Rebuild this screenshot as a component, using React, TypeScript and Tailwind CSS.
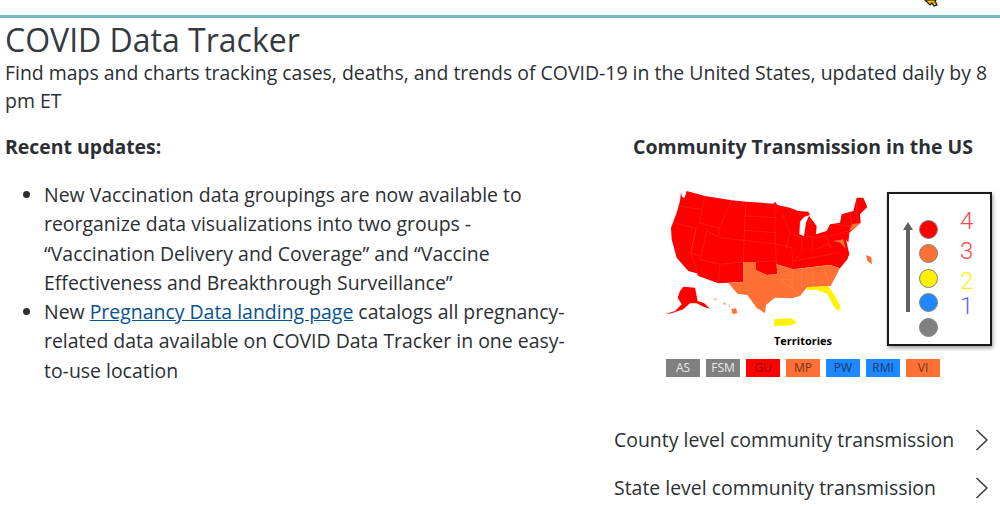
const chips = [
  { label: "AS", bg: "bg-[#808080]", fg: "text-[#e8e8e8]" },
  { label: "FSM", bg: "bg-[#808080]", fg: "text-[#e8e8e8]" },
  { label: "GU", bg: "bg-[#ff0000]", fg: "text-[#8a1010]" },
  { label: "MP", bg: "bg-[#ff7034]", fg: "text-[#6b3520]" },
  { label: "PW", bg: "bg-[#1e88ff]", fg: "text-[#123a66]" },
  { label: "RMI", bg: "bg-[#1e88ff]", fg: "text-[#123a66]" },
  { label: "VI", bg: "bg-[#ff7034]", fg: "text-[#6b3520]" },
];

const levels = ["bg-[#ff0000]", "bg-[#ff7034]", "bg-[#fff200]", "bg-[#1e88ff]", "bg-[#808080]"];

function UsMap() {
  return (
    <svg width="220" height="150" viewBox="0 0 660 450" strokeLinejoin="round" className="block blur-[0.4px]">
      {/* lower 48, red part */}
      <path
        fill="#ff0000"
        d="M63 33 L66 48 L74 50 L80 30 L135 45 L215 58 L260 62 L340 68 L345 62 L352 72 L390 80 L415 90 L445 92 L450 102 L432 108 L420 122 L418 160 L432 165 L438 125 L447 104 L470 135 L468 160 L500 150 L510 130 L540 125 L545 100 L580 90 L590 50 L610 50 L622 78 L600 100 L602 125 L580 145 L568 155 L565 185 L558 175 L568 220 L562 235 L540 262 L510 252 L400 265 L350 250 L352 280 L320 282 L288 268 L288 243 L250 243 L250 303 L205 305 L175 307 L115 285 L110 277 L85 270 L50 230 L35 175 L33 140 L50 95 L60 60 Z"
      />
      {/* orange states */}
      <path
        fill="#ff7034"
        d="M250 243 L288 243 L288 268 L320 282 L352 280 L350 250 L400 265 L510 252 L540 262 L512 315 L440 320 L420 345 L395 352 L345 350 L318 372 L315 397 L290 380 L262 342 L232 338 L205 306 L250 303 Z"
      />
      <path fill="#ff7034" d="M575 130 L602 125 L580 145 L568 150 Z M520 180 L550 175 L558 205 L550 195 L540 185 Z M618 222 L634 228 L636 250 L622 240 Z M214 384 L228 382 L232 396 L218 400 Z M160 352 L170 354 L168 358 Z M188 364 L198 368 L194 372 Z M204 372 L210 374 L208 378 Z" />
      {/* florida and puerto rico */}
      <path fill="#fff200" d="M440 318 L505 315 L525 345 L541 375 L537 392 L522 378 L502 338 L470 327 L440 326 Z M343 414 L395 412 L410 424 L396 433 L342 435 Z" />
      {/* alaska */}
      <path
        fill="#ff0000"
        d="M70 317 L105 320 L113 360 L133 367 L150 383 L130 377 L110 367 L90 367 L70 385 L35 397 L15 400 L45 390 L65 370 L53 350 L60 330 Z"
      />
      {/* state lines */}
      <path
        fill="none"
        stroke="#ff6a6a"
        strokeOpacity="0.7"
        strokeWidth="1"
        d="M135 45 L118 125 L178 142 L175 168 L140 150 M55 75 L125 85 M40 125 L108 142 L92 215 L118 225 M108 142 L92 215 L115 285 M140 150 L120 235 L180 250 L175 307 M180 250 L250 243 M178 170 L252 178 L250 243 M215 58 L178 142 M258 62 L252 178 M252 105 L345 110 M252 148 L350 155 M252 178 L345 188 L350 250 M345 68 L345 188 M288 243 L350 240 M345 188 L395 200 L400 265 M368 100 L390 155 L378 205 M390 155 L425 170 L425 215 L400 240 M425 170 L455 165 L458 205 M458 170 L500 165 M400 240 L540 215 M470 205 L500 190 L520 200 M500 165 L510 200 M510 165 L565 150 M525 130 L570 135 M570 90 L575 130 M590 60 L590 115"
      />
      <path
        fill="none"
        stroke="#ff9a70"
        strokeWidth="1"
        d="M400 265 L395 320 L360 295 M395 320 L420 345 M425 260 L425 322 M455 258 L462 318 M490 254 L510 315 M365 295 L400 295"
      />
    </svg>
  );
}

export default function App() {
  return (
    <div
      className="relative w-[1000px] h-[508px] overflow-hidden bg-white text-[#2b2f33]"
      style={{ fontFamily: '"Open Sans", sans-serif' }}
    >
      {/* mouse pointer cut off by the top edge */}
      <svg width="14" height="7" viewBox="0 0 14 7" className="absolute left-[924px] top-0">
        <path d="M1 0 L6 5 L8 3 L10 6 L13 5 L11 1 L12 0 Z" fill="#f5b000" stroke="#1a1a1a" strokeWidth="1.2" />
      </svg>

      <div className="h-[15px]" />
      <div className="h-[3px] bg-[#78b9c1]" />

      <div className="pl-[5px] pr-[8px]">
        <h1 className="text-[32px] leading-[44px] text-[#343a40]">COVID Data Tracker</h1>
        <p className="text-[19.45px] leading-[28px] -mt-[3px]">
          Find maps and charts tracking cases, deaths, and trends of COVID-19 in the United States, updated daily by 8 pm ET
        </p>
      </div>

      <div className="flex mt-[18px]">
        <div className="w-[600px] pl-[5px]">
          <h2 className="text-[19.45px] leading-[28px] font-bold">Recent updates:</h2>
          <ul className="list-disc pl-[39px] pr-[30px] mt-[19px] text-[19.45px] leading-[29.3px]">
            <li>
              New Vaccination data groupings are now available to reorganize data visualizations into two groups - “Vaccination Delivery and Coverage” and “Vaccine Effectiveness and Breakthrough Surveillance”
            </li>
            <li>
              New <a className="text-[#075290] underline">Pregnancy Data landing page</a> catalogs all pregnancy-related data available on COVID Data Tracker in one easy-to-use location
            </li>
          </ul>
        </div>

        <div className="w-[400px] flex flex-col">
          <h2 className="text-[19.45px] leading-[28px] font-bold pl-[33px] whitespace-nowrap">Community Transmission in the US</h2>

          <div className="flex mt-[20px] pl-[60px]">
            <div className="flex flex-col w-[220px] shrink-0">
              <UsMap />
              <div className="text-[11px] leading-[14px] font-bold text-black text-center pl-[66px] mt-[3px]">Territories</div>
              <div className="flex gap-[6px] mt-[11px] pl-[6px] w-[300px]">
                {chips.map((c) => (
                  <span key={c.label} className={`w-[34px] h-[18px] shrink-0 flex items-center justify-center text-[12px] ${c.bg} ${c.fg}`}>
                    {c.label}
                  </span>
                ))}
              </div>
            </div>

            <div className="w-[105px] h-[154px] shrink-0 ml-[7px] mt-[11px] border-2 border-[#1a1a1a] shadow-[1px_2px_4px_rgba(0,0,0,0.4)] flex">
              <div className="flex flex-col items-center w-[17px] ml-[10px] mt-[28px]">
                <div className="w-0 h-0 border-x-[5px] border-x-transparent border-b-[8px] border-b-[#606060]" />
                <div className="w-[4px] h-[82px] bg-[#606060]" />
              </div>
              <div className="flex flex-col gap-[5.4px] ml-[3px] mt-[26px]">
                {levels.map((bg) => (
                  <div key={bg} className={`w-[19px] h-[19px] rounded-full border border-[#808080] ${bg}`} />
                ))}
              </div>
              <div className="flex flex-col items-center ml-[22px] mt-[12px] text-[24px] leading-[30px] font-light" style={{ fontFamily: "Roboto, sans-serif" }}>
                <span className="text-[#f24a4a]">4</span>
                <span className="text-[#f24a4a]">3</span>
                <span className="text-[#fff200]">2</span>
                <span className="text-[#5a68f0] -mt-[5px]">1</span>
              </div>
            </div>
          </div>

          <a className="flex items-center justify-between pl-[14px] pr-[10px] mt-[48px] h-[30px] text-[19.45px]">
            <span>County level community transmission</span>
            <Chevron />
          </a>
          <a className="flex items-center justify-between pl-[14px] pr-[10px] mt-[18px] h-[30px] text-[19.45px]">
            <span>State level community transmission</span>
            <Chevron />
          </a>
        </div>
      </div>
    </div>
  );
}

function Chevron() {
  return (
    <svg width="16" height="22" viewBox="0 0 16 22" fill="none" stroke="#333333" strokeWidth="1.4">
      <path d="M2.5 1 L13 11 L2.5 21" />
    </svg>
  );
}
